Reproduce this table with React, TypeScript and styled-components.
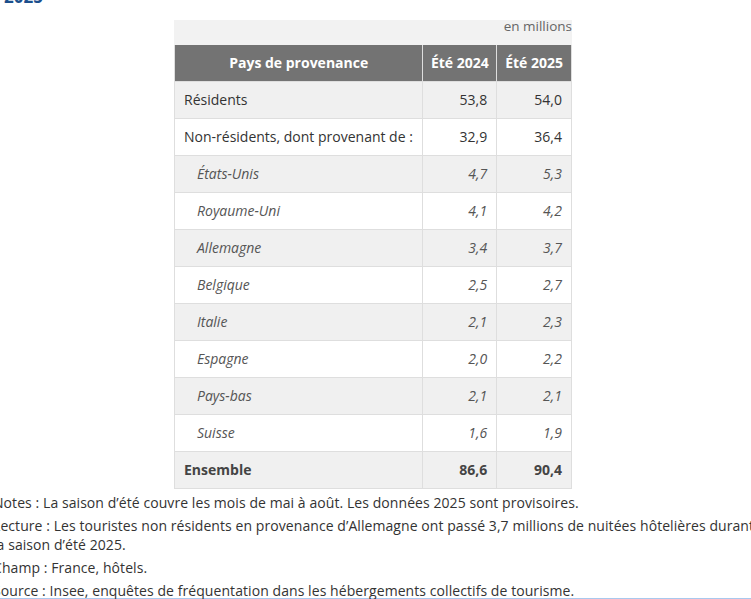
import React from "react";
import styled, { createGlobalStyle } from "styled-components";

const Global = createGlobalStyle`
  html, body { margin: 0; padding: 0; background: #fff; }
  body { font-family: "Open Sans", "Liberation Sans", sans-serif; color: #333; overflow: hidden; }
`;

const Page = styled.div`
  margin-left: -7px;
  width: 760px;
`;

const Title = styled.h2`
  margin: -13px 0 0 0;
  padding-left: 11px;
  font-size: 17px;
  line-height: 20px;
  font-weight: 700;
  color: #1c4f8c;
`;

const Table = styled.table`
  margin: 13px auto 0;
  width: 398px;
  border-collapse: collapse;
  font-size: 14px;
  line-height: 19px;
`;

const Caption = styled.caption`
  caption-side: top;
  background: #f2f2f2;
  text-align: right;
  font-size: 13.5px;
  color: #666;
  height: 25px;
  line-height: 12px;
  padding: 0;
`;

const Th = styled.th<{ $w?: number }>`
  background: #737373;
  color: #fff;
  font-weight: 700;
  height: 36px;
  padding: 0 6px;
  border: 1px solid #dedede;
  border-top: none;
  text-align: center;
  white-space: nowrap;
  box-sizing: border-box;
  width: ${(p) => (p.$w ? `${p.$w}px` : "auto")};
`;

const Tr = styled.tr<{ $odd: boolean }>`
  background: ${(p) => (p.$odd ? "#f0f0f0" : "#fff")};
  height: 37px;
`;

const Td = styled.td<{ $num?: boolean; $sub?: boolean; $bold?: boolean }>`
  border: 1px solid #dedede;
  padding: 0 ${(p) => (p.$num ? "9px" : "0")} 0 ${(p) => (p.$num ? "0" : p.$sub ? "22px" : "9px")};
  text-align: ${(p) => (p.$num ? "right" : "left")};
  font-style: ${(p) => (p.$sub ? "italic" : "normal")};
  font-weight: ${(p) => (p.$bold ? 700 : 400)};
  color: ${(p) => (p.$sub ? "#555" : p.$bold ? "#444" : "#333")};
  white-space: nowrap;
`;

const Notes = styled.div`
  padding-top: 4px;
  font-size: 14px;
  line-height: 19px;
  letter-spacing: 0.07px;
  color: #333;
  border-bottom: 1px solid #a9c8ee;
  width: 763px;
`;

const Note = styled.p`
  margin: 0 0 4px 0;
  &:last-child { margin-bottom: -2px; }
`;

type Row = { label: string; a: string; b: string; sub?: boolean; bold?: boolean };

const rows: Row[] = [
  { label: "Résidents", a: "53,8", b: "54,0" },
  { label: "Non-résidents, dont provenant de :", a: "32,9", b: "36,4" },
  { label: "États-Unis", a: "4,7", b: "5,3", sub: true },
  { label: "Royaume-Uni", a: "4,1", b: "4,2", sub: true },
  { label: "Allemagne", a: "3,4", b: "3,7", sub: true },
  { label: "Belgique", a: "2,5", b: "2,7", sub: true },
  { label: "Italie", a: "2,1", b: "2,3", sub: true },
  { label: "Espagne", a: "2,0", b: "2,2", sub: true },
  { label: "Pays-bas", a: "2,1", b: "2,1", sub: true },
  { label: "Suisse", a: "1,6", b: "1,9", sub: true },
  { label: "Ensemble", a: "86,6", b: "90,4", bold: true },
];

export default function App() {
  return (
    <>
      <Global />
      <Page>
        <Title>2025</Title>
        <Table>
          <Caption>en millions</Caption>
          <thead>
            <tr>
              <Th $w={249}>Pays de provenance</Th>
              <Th $w={74}>Été 2024</Th>
              <Th $w={75}>Été 2025</Th>
            </tr>
          </thead>
          <tbody>
            {rows.map((r, i) => (
              <Tr key={r.label} $odd={i % 2 === 0}>
                <Td $sub={r.sub} $bold={r.bold}>{r.label}</Td>
                <Td $num $sub={r.sub} $bold={r.bold}>{r.a}</Td>
                <Td $num $sub={r.sub} $bold={r.bold}>{r.b}</Td>
              </Tr>
            ))}
          </tbody>
        </Table>
        <Notes>
          <Note>Notes : La saison d’été couvre les mois de mai à août. Les données 2025 sont provisoires.</Note>
          <Note>Lecture : Les touristes non résidents en provenance d’Allemagne ont passé 3,7 millions de nuitées hôtelières durant la saison d’été 2025.</Note>
          <Note>Champ : France, hôtels.</Note>
          <Note>Source : Insee, enquêtes de fréquentation dans les hébergements collectifs de tourisme.</Note>
        </Notes>
      </Page>
    </>
  );
}
